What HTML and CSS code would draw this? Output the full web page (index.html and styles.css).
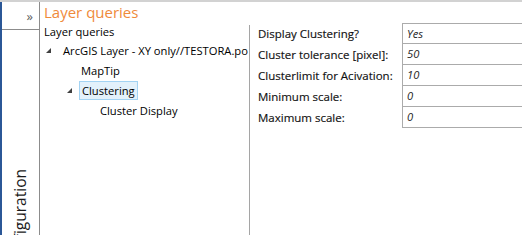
FILE: index.html
```html
<!DOCTYPE html>
<html>
<head>
<meta charset="utf-8">
<link rel="stylesheet" href="styles.css">
</head>
<body>
<div class="app">
  <div class="topline"></div>
  <div class="main">
    <aside class="sidebar">
      <div class="sidebar-head"><span class="expand">»</span></div>
      <div class="sidebar-body"><span class="vtext">Configuration</span></div>
    </aside>
    <section class="content">
      <h1 class="title">Layer queries</h1>
      <div class="panes">
        <div class="tree">
          <div class="tree-root">Layer queries</div>
          <div class="node lvl1">
            <svg class="arrow" width="5" height="5" viewBox="0 0 5 5"><polygon points="0,5 5,5 5,0" fill="#404040"/></svg>
            <span class="label">ArcGIS Layer - XY only//TESTORA.po</span>
          </div>
          <div class="node lvl2 leaf"><span class="label">MapTip</span></div>
          <div class="node lvl2">
            <svg class="arrow" width="5" height="5" viewBox="0 0 5 5"><polygon points="0,5 5,5 5,0" fill="#404040"/></svg>
            <span class="label selected">Clustering</span>
          </div>
          <div class="node lvl3 leaf"><span class="label">Cluster Display</span></div>
        </div>
        <div class="splitter"></div>
        <div class="props">
          <div class="prop"><span class="pname">Display Clustering?</span><span class="pval">Yes</span></div>
          <div class="prop"><span class="pname">Cluster tolerance [pixel]:</span><span class="pval">50</span></div>
          <div class="prop"><span class="pname">Clusterlimit for Acivation:</span><span class="pval">10</span></div>
          <div class="prop"><span class="pname">Minimum scale:</span><span class="pval">0</span></div>
          <div class="prop"><span class="pname">Maximum scale:</span><span class="pval">0</span></div>
        </div>
      </div>
    </section>
  </div>
</div>
</body>
</html>
```
FILE: styles.css
```css
html, body {
  margin: 0;
  padding: 0;
  background: #ffffff;
}
body {
  width: 522px;
  height: 235px;
  overflow: hidden;
  font-family: "Open Sans", "Noto Sans", sans-serif;
  font-size: 11.2px;
  color: #000;
}
.app {
  display: flex;
  flex-direction: column;
  height: 235px;
}
.topline {
  height: 2px;
  background: #d2d2d2;
  flex: none;
}
.main {
  flex: 1;
  display: flex;
  min-height: 0;
}
.sidebar {
  width: 37px;
  flex: none;
  border-left: 2px solid #2b5797;
  border-right: 1px solid #8c8c8c;
  display: flex;
  flex-direction: column;
}
.sidebar-head {
  height: 27px;
  border-bottom: 1px solid #8c8c8c;
  display: flex;
  justify-content: flex-end;
  align-items: center;
  padding-right: 6px;
  flex: none;
}
.expand {
  color: #606060;
  font-size: 13px;
  line-height: 13px;
  margin-top: 2px;
}
.sidebar-body {
  flex: 1;
  overflow: hidden;
  padding-top: 139px;
  padding-left: 10px;
}
.vtext {
  display: inline-block;
  writing-mode: vertical-rl;
  transform: rotate(180deg);
  font-size: 15.5px;
  color: #1a1a1a;
  line-height: 17px;
}
.content {
  flex: 1;
  display: flex;
  flex-direction: column;
  min-width: 0;
}
.title {
  margin: 0;
  padding-left: 4px;
  font-weight: normal;
  font-size: 15px;
  line-height: 21px;
  height: 21px;
  color: #ef8a3a;
  flex: none;
}
.panes {
  flex: 1;
  display: flex;
  min-height: 0;
}
.tree {
  width: 209px;
  flex: none;
  overflow: hidden;
  white-space: nowrap;
  padding-top: 1px;
}
.tree-root {
  padding-left: 4px;
  line-height: 16px;
  height: 16px;
}
.node {
  height: 20px;
  display: flex;
  align-items: center;
}
.arrow {
  flex: none;
  margin-right: 10px;
}
.lvl1 { padding-left: 6px; }
.lvl1 .arrow { margin-right: 9px; }
.lvl2 { padding-left: 27px; }
.lvl2.leaf { padding-left: 41px; }
.lvl3.leaf { padding-left: 60px; }
.label {
  padding: 1px 2px;
  border: 1px solid transparent;
  line-height: 15px;
  margin-left: -3px;
}
.lvl1 .label { margin-left: 0; }
.selected {
  background: #e3f1fb;
  border-color: #a3d3f3;
}
.splitter {
  width: 1px;
  flex: none;
  background: #a5a5a5;
  margin-top: 2px;
}
.props {
  flex: 1;
  padding-top: 0;
}
.prop {
  display: flex;
  height: 21px;
  color: #111;
}
.pname {
  width: 144px;
  flex: none;
  padding-left: 8px;
  line-height: 21px;
  font-size: 11.5px;
  -webkit-text-stroke: 0.15px #111;
}
.pval {
  flex: 1;
  border: 1px solid #ababab;
  border-right: none;
  border-top: none;
  padding-left: 4px;
  line-height: 20px;
  font-style: italic;
  color: #1e1e1e;
}
.prop:first-child .pval {
  border-top: 1px solid #ababab;
  line-height: 19px;
}
```
